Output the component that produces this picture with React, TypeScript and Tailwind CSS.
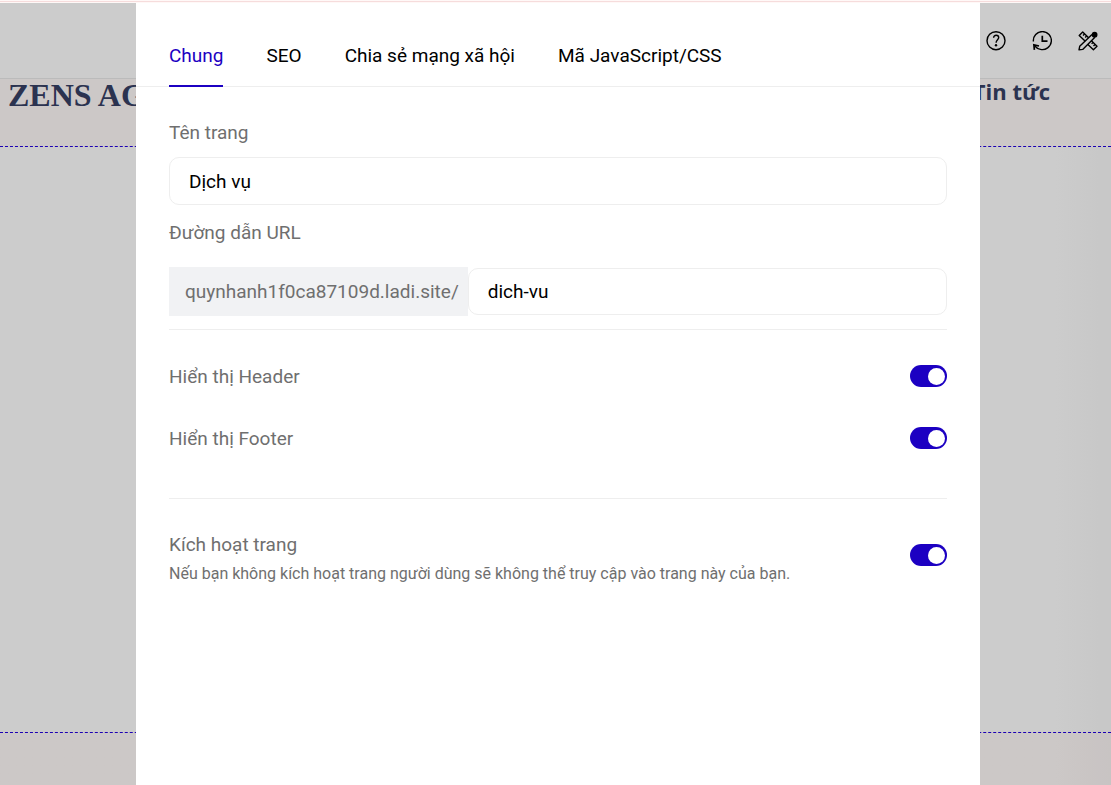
import React, { useState } from 'react';

type ToggleProps = {
  id: string;
  checked: boolean;
  onChange: (value: boolean) => void;
};

const tabs = ['Chung', 'SEO', 'Chia sẻ mạng xã hội', 'Mã JavaScript/CSS'];

const HelpIcon = () => (
  <svg width="20" height="20" viewBox="0 0 20 20" fill="none" stroke="currentColor" strokeWidth="1.4">
    <circle cx="10" cy="9.700" r="9" />
    <path d="M7.600 6.700C7.600 5.200 8.600 4.300 10.200 4.300s2.500.9 2.500 2.200c0 2-2.600 2.500-2.600 5.200" />
    <circle cx="10" cy="14.300" r="1.200" fill="currentColor" stroke="none" />
  </svg>
);

const HistoryIcon = () => (
  <svg width="20" height="20" viewBox="0 0 20 20" fill="none" stroke="currentColor" strokeWidth="1.400">
    <path d="M1.400 10.500A9 9 0 1 1 8.500 18.400C6.300 18.100 4.500 17.100 2.800 15" />
    <path d="M2.400 18.800L1.900 13.900L7 15" strokeWidth="1.700" />
    <path d="M10.300 4.800v5.300h5.200" strokeWidth="1.700" />
  </svg>
);

// Thước kẻ và bút chì
const DesignIcon = () => (
  <svg width="20" height="20" viewBox="0 0 20 20" fill="none" stroke="currentColor" strokeWidth="1.400" strokeLinejoin="round">
    <path d="M7.300 10.300L1.200 4.400L4.700 1L10.600 6.800" />
    <path d="M13.200 9.600L19 15.200L15.400 18.700L9.600 13.200" />
    <path d="M6.600 3L5 4.600M8.600 5L7.200 6.400M15 11.400L13.600 12.800M17 13.400L15.500 14.900" />
    <path d="M14 3.400L1.700 15.300L1 18.900L4.700 18.400L16.900 6.200" />
    <circle cx="16.600" cy="3.700" r="2.900" fill="currentColor" stroke="none" />
  </svg>
);

const Toggle = ({ id, checked, onChange }: ToggleProps) => (
  <input
    id={id}
    type="checkbox"
    role="switch"
    checked={checked}
    onChange={(e) => onChange(e.target.checked)}
    className="flex h-[22px] w-[37px] shrink-0 cursor-pointer appearance-none items-center rounded-full bg-gray-300 px-[2px] before:size-[17px] before:rounded-full before:bg-white before:content-[''] checked:justify-end checked:bg-[#1c00c2]"
  />
);

// Trang đang chỉnh sửa nằm phía sau hộp thoại
const EditorPage = () => (
  <div className="flex min-h-screen flex-col bg-white">
    <div className="h-[3px] bg-[#fff8f7] pt-px">
      <div className="h-px bg-[#f6dcdc]" />
    </div>
    <header className="flex h-[76px] items-center justify-end gap-[26px] border-b border-[#eaeaea] px-[13px] text-black">
      <button type="button" aria-label="Trợ giúp"><HelpIcon /></button>
      <button type="button" aria-label="Lịch sử"><HistoryIcon /></button>
      <button type="button" aria-label="Thiết kế"><DesignIcon /></button>
    </header>
    <div className="flex h-[68px] items-start justify-between border-b border-dashed border-[#2200e0] bg-[#fffaf9] pr-[61px] pl-2 font-bold text-[#364064]">
      <span className="font-['Liberation_Serif',serif] text-[32px] leading-8">ZENS AGENCY</span>
      <a href="#" className="font-['Open_Sans',sans-serif] text-[22px] leading-6">Tin tức</a>
    </div>
    <div className="flex-1 bg-linear-to-r from-white from-95% to-[#fafafa]" />
    <div className="h-[53px] border-t border-dashed border-[#2200e0] bg-linear-to-r from-[#fffaf9] from-95% to-[#fbf5f4]" />
  </div>
);

const App = () => {
  const [activeTab, setActiveTab] = useState('Chung');
  const [pageName, setPageName] = useState('Dịch vụ');
  const [slug, setSlug] = useState('dich-vu');
  const [showHeader, setShowHeader] = useState(true);
  const [showFooter, setShowFooter] = useState(true);
  const [active, setActive] = useState(true);

  return (
    <div className="relative font-[Roboto,sans-serif] text-[19px] leading-6">
      <EditorPage />

      <div className="absolute inset-x-0 top-[3px] bottom-0 flex justify-center bg-black/20 pl-[5px]">
        <div role="dialog" aria-label="Cài đặt trang" className="w-full max-w-[844px] bg-white text-[#6f6f6f]">
          <div role="tablist" className="flex gap-[43px] border-b border-[#eeeeee] px-[33px] pt-[41px]">
            {tabs.map((tab) => (
              <button
                key={tab}
                type="button"
                role="tab"
                aria-selected={tab === activeTab}
                onClick={() => setActiveTab(tab)}
                className={`-mb-px border-b-2 pb-[17px] ${
                  tab === activeTab ? 'border-[#1c00c2] text-[#1c00c2]' : 'border-transparent text-black'
                }`}
              >
                {tab}
              </button>
            ))}
          </div>

          <div className="px-[33px] pt-[34px]">
            <label htmlFor="page-name" className="block">Tên trang</label>
            <input
              id="page-name"
              type="text"
              value={pageName}
              onChange={(e) => setPageName(e.target.value)}
              className="mt-3 h-12 w-full rounded-[10px] border border-[#eeeeee] px-[19px] text-black outline-none"
            />

            <label htmlFor="page-slug" className="mt-4 block">Đường dẫn URL</label>
            <div className="mt-[22px] flex items-center">
              <span className="bg-[#f1f2f4] pt-[13px] pr-[9px] pb-3 pl-4">quynhanh1f0ca87109d.ladi.site/</span>
              <input
                id="page-slug"
                type="text"
                value={slug}
                onChange={(e) => setSlug(e.target.value)}
                className="h-[47px] min-w-0 flex-1 rounded-[10px] border border-[#eeeeee] px-[19px] text-black outline-none"
              />
            </div>

            <div className="mt-[13px] flex flex-col gap-[38px] border-y border-[#eeeeee] pt-[35px] pb-[47px]">
              <div className="flex items-start justify-between">
                <label htmlFor="show-header">Hiển thị Header</label>
                <Toggle id="show-header" checked={showHeader} onChange={setShowHeader} />
              </div>
              <div className="flex items-start justify-between">
                <label htmlFor="show-footer">Hiển thị Footer</label>
                <Toggle id="show-footer" checked={showFooter} onChange={setShowFooter} />
              </div>
            </div>

            <div className="flex items-start justify-between pt-[34px]">
              <div>
                <label htmlFor="page-active" className="block">Kích hoạt trang</label>
                <p className="mt-[5px] text-base">
                  Nếu bạn không kích hoạt trang người dùng sẽ không thể truy cập vào trang này của bạn.
                </p>
              </div>
              <div className="pt-[11px]">
                <Toggle id="page-active" checked={active} onChange={setActive} />
              </div>
            </div>
          </div>
        </div>
      </div>
    </div>
  );
};

export default App;
